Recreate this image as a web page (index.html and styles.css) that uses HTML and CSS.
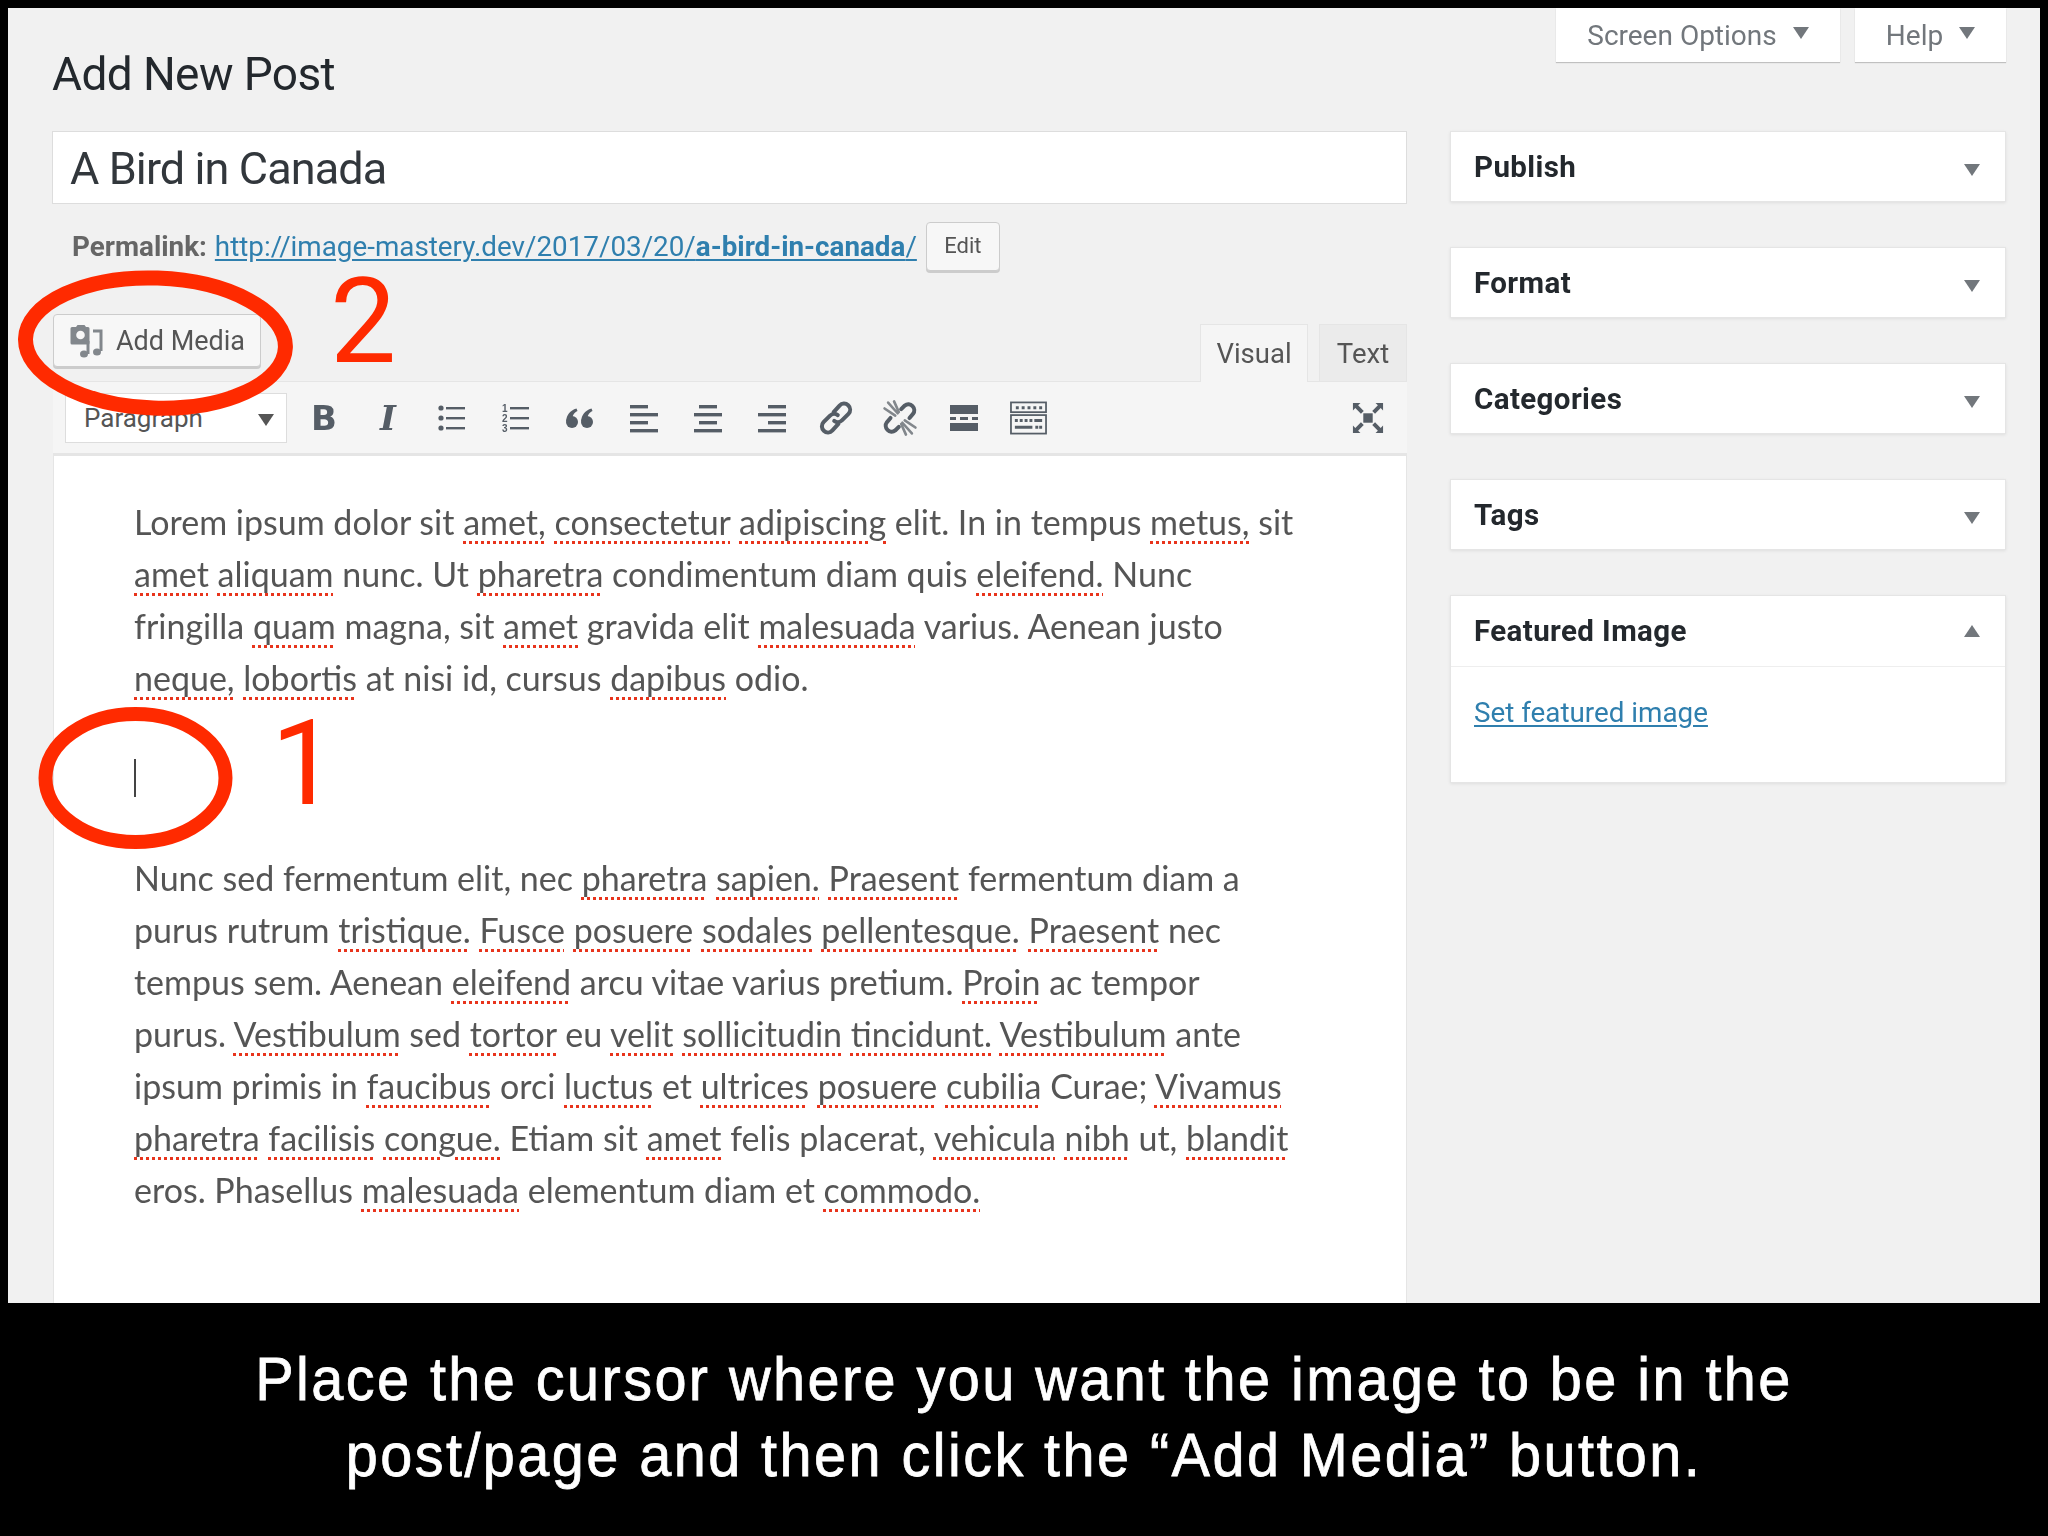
FILE: index.html
```html
<!DOCTYPE html>
<html lang="en">
<head>
<meta charset="utf-8">
<title>Add New Post</title>
<link rel="stylesheet" href="styles.css">
</head>
<body>
<div class="page">
  <div class="screen">
    <div class="ui">
      <header class="topbar">
        <h1 class="heading">Add New Post</h1>
        <div class="screen-tabs">
          <div class="screen-tab tab-options">Screen Options<span class="tri-small"></span></div>
          <div class="screen-tab tab-help">Help<span class="tri-small"></span></div>
        </div>
      </header>
      <div class="columns">
        <main class="main">
          <div class="title-box">A Bird in Canada</div>
          <div class="permalink">
            <b class="perma-label">Permalink:</b>
            <a class="perma-link">http://image-mastery.dev/2017/03/20/<b>a-bird-in-canada</b>/</a>
            <span class="btn btn-edit">Edit</span>
          </div>
          <div class="media-row">
            <span class="btn btn-media">
              <svg class="media-icon" viewBox="0 0 34 34"><path d="M3 3h4l1.500-2h7l1.500 2h2a1.500 1.500 0 0 1 1.500 1.500V19a1.500 1.500 0 0 1-1.500 1.500H3A1.500 1.500 0 0 1 1.500 19V4.500A1.500 1.500 0 0 1 3 3z" fill="#82878c"/><circle cx="11.500" cy="11" r="4.300" fill="#f7f7f7"/><path d="M24 7h8v20" fill="none" stroke="#82878c" stroke-width="3"/><ellipse cx="28" cy="28" rx="4" ry="3.500" fill="#82878c"/><path d="M19 17v13" stroke="#82878c" stroke-width="3"/><ellipse cx="15" cy="30" rx="4" ry="3.500" fill="#82878c"/></svg>
              Add Media
            </span>
            <div class="editor-tabs">
              <span class="editor-tab active">Visual</span>
              <span class="editor-tab">Text</span>
            </div>
          </div>
          <div class="toolbar">
            <div class="select">Paragraph<span class="tri"></span></div>
            <span class="tool glyph-b">B</span>
            <span class="tool glyph-i">I</span>
            <span class="tool"><svg class="ico" viewBox="0 0 32 32"><g fill="#555d66"><circle cx="5" cy="6" r="2.600"/><circle cx="5" cy="16" r="2.600"/><circle cx="5" cy="26" r="2.600"/><rect x="10" y="5" width="19" height="2.400"/><rect x="10" y="15" width="19" height="2.400"/><rect x="10" y="25" width="19" height="2.400"/></g></svg></span>
            <span class="tool"><svg class="ico" viewBox="0 0 32 32"><g fill="#555d66"><text class="ol-num" x="2" y="10">1</text><text class="ol-num" x="2" y="20">2</text><text class="ol-num" x="2" y="30">3</text><rect x="10" y="5" width="19" height="2.400"/><rect x="10" y="15" width="19" height="2.400"/><rect x="10" y="25" width="19" height="2.400"/></g></svg></span>
            <span class="tool"><svg class="ico" viewBox="0 0 32 32"><g fill="#555d66"><circle cx="8" cy="20" r="6"/><path d="M2.200 19C2.500 13 6 8.500 12.500 6.500l1 2.500C9.500 11 8 14 8.200 19z"/><circle cx="23" cy="20" r="6"/><path d="M17.200 19C17.500 13 21 8.500 27.500 6.500l1 2.500C24.500 11 23 14 23.200 19z"/></g></svg></span>
            <span class="tool"><svg class="ico" viewBox="0 0 32 32"><g fill="#555d66"><rect x="2" y="3" width="18" height="3.400"/><rect x="2" y="11" width="28" height="3.400"/><rect x="2" y="19" width="18" height="3.400"/><rect x="2" y="27" width="28" height="3.400"/></g></svg></span>
            <span class="tool"><svg class="ico" viewBox="0 0 32 32"><g fill="#555d66"><rect x="7" y="3" width="18" height="3.400"/><rect x="2" y="11" width="28" height="3.400"/><rect x="7" y="19" width="18" height="3.400"/><rect x="2" y="27" width="28" height="3.400"/></g></svg></span>
            <span class="tool"><svg class="ico" viewBox="0 0 32 32"><g fill="#555d66"><rect x="12" y="3" width="18" height="3.400"/><rect x="2" y="11" width="28" height="3.400"/><rect x="12" y="19" width="18" height="3.400"/><rect x="2" y="27" width="28" height="3.400"/></g></svg></span>
            <span class="tool"><svg class="ico ico-lg" viewBox="0 0 32 32"><g fill="none" stroke="#555d66" stroke-width="3.400" stroke-linecap="round"><path d="M14 11l5-5.500a5 5 0 0 1 7.500 7L21 18a5 5 0 0 1-6.500.5"/><path d="M18 21l-5 5.500a5 5 0 0 1-7.500-7L11 14a5 5 0 0 1 6.500-.5"/></g></svg></span>
            <span class="tool"><svg class="ico ico-lg" viewBox="0 0 32 32"><g fill="none" stroke="#555d66" stroke-width="3.400" stroke-linecap="round"><path d="M17 8.500l3-3a5 5 0 0 1 7 7l-3 3.500"/><path d="M15 23.500l-3 3a5 5 0 0 1-7-7l3-3.500"/></g><g stroke="#82878c" stroke-width="2.200" stroke-linecap="round"><path d="M6 3l8 9M3 8l9 6M11 2l4 9M26 29l-8-9M29 24l-9-6M21 30l-4-9"/></g></svg></span>
            <span class="tool"><svg class="ico" viewBox="0 0 32 32"><g fill="#555d66"><rect x="2" y="3" width="28" height="9"/><rect x="2" y="15" width="6" height="3"/><rect x="12" y="15" width="8" height="3"/><rect x="24" y="15" width="6" height="3"/><rect x="2" y="21" width="28" height="8"/></g></svg></span>
            <span class="tool"><svg class="ico ico-wide" viewBox="0 0 38 34"><g fill="none" stroke="#555d66" stroke-width="1.800"><rect x="1" y="1" width="36" height="10"/><rect x="1" y="14" width="36" height="19"/></g><g fill="#555d66"><path d="M6 5h3v3H6zM12 5h3v3h-3zM18 5h3v3h-3zM24 5h3v3h-3zM30 5h3v3h-3zM5 18h3v3H5zM10 18h3v3h-3zM15 18h3v3h-3zM20 18h3v3h-3zM25 18h8v3h-8zM5 25h18v3H5zM26 25h3v3h-3zM30 25h3v3h-3z"/></g></svg></span>
            <span class="tool tool-end"><svg class="ico" viewBox="0 0 34 34"><g fill="#555d66"><rect x="12" y="12" width="10" height="10"/><path d="M1 1h8L6.500 3.500l6 6-3 3-6-6L1 9zM33 1v8l-2.500-2.500-6 6-3-3 6-6L25 1zM1 33V25l2.500 2.500 6-6 3 3-6 6L9 33zM33 33h-8l2.500-2.500-6-6 3-3 6 6L33 25z"/></g></svg></span>
          </div>
          <div class="editor">
            <p class="para"><span class="line">Lorem ipsum dolor sit <u class="sp">amet,</u> <u class="sp">consectetur</u> <u class="sp">adipiscing</u> elit. In in tempus <u class="sp">metus,</u> sit</span><span class="line"><u class="sp">amet</u> <u class="sp">aliquam</u> nunc. Ut <u class="sp">pharetra</u> condimentum diam quis <u class="sp">eleifend.</u> Nunc</span><span class="line">fringilla <u class="sp">quam</u> magna, sit <u class="sp">amet</u> gravida elit <u class="sp">malesuada</u> varius. Aenean justo</span><span class="line"><u class="sp">neque,</u> <u class="sp">lobortis</u> at nisi id, cursus <u class="sp">dapibus</u> odio.</span></p>
            <p class="para caret-para"><span class="caret"></span></p>
            <p class="para"><span class="line">Nunc sed fermentum elit, nec <u class="sp">pharetra</u> <u class="sp">sapien.</u> <u class="sp">Praesent</u> fermentum diam a</span><span class="line">purus rutrum <u class="sp">tristique.</u> <u class="sp">Fusce</u> <u class="sp">posuere</u> <u class="sp">sodales</u> <u class="sp">pellentesque.</u> <u class="sp">Praesent</u> nec</span><span class="line">tempus sem. Aenean <u class="sp">eleifend</u> arcu vitae varius pretium. <u class="sp">Proin</u> ac tempor</span><span class="line">purus. <u class="sp">Vestibulum</u> sed <u class="sp">tortor</u> eu <u class="sp">velit</u> <u class="sp">sollicitudin</u> <u class="sp">tincidunt.</u> <u class="sp">Vestibulum</u> ante</span><span class="line">ipsum primis in <u class="sp">faucibus</u> orci <u class="sp">luctus</u> et <u class="sp">ultrices</u> <u class="sp">posuere</u> <u class="sp">cubilia</u> Curae; <u class="sp">Vivamus</u></span><span class="line"><u class="sp">pharetra</u> <u class="sp">facilisis</u> <u class="sp">congue.</u> Etiam sit <u class="sp">amet</u> felis placerat, <u class="sp">vehicula</u> <u class="sp">nibh</u> ut, <u class="sp">blandit</u></span><span class="line">eros. Phasellus <u class="sp">malesuada</u> elementum diam et <u class="sp">commodo.</u></span></p>
          </div>
        </main>
        <aside class="side">
          <section class="box"><div class="box-head"><h2 class="box-title">Publish</h2><span class="box-tri"></span></div></section>
          <section class="box"><div class="box-head"><h2 class="box-title">Format</h2><span class="box-tri"></span></div></section>
          <section class="box"><div class="box-head"><h2 class="box-title">Categories</h2><span class="box-tri"></span></div></section>
          <section class="box"><div class="box-head"><h2 class="box-title">Tags</h2><span class="box-tri"></span></div></section>
          <section class="box">
            <div class="box-head box-head-open"><h2 class="box-title">Featured Image</h2><span class="box-tri up"></span></div>
            <div class="box-body"><a class="feat-link">Set featured image</a></div>
          </section>
        </aside>
      </div>
    </div>
    <svg class="marks" viewBox="0 0 2032 1295">
      <ellipse cx="147.500" cy="335" rx="130" ry="65" transform="rotate(2 147 334)" fill="none" stroke="#ff2a00" stroke-width="15"/>
      <ellipse cx="127.500" cy="770" rx="90" ry="64" fill="none" stroke="#ff2a00" stroke-width="14"/>
    </svg>
    <span class="digit digit-two">2</span>
    <span class="digit digit-one">1</span>
  </div>
  <footer class="caption"><div class="caption-text">Place the cursor where you want the image to be in the<br>post/page and then click the “Add Media” button.</div></footer>
</div>
</body>
</html>
```
FILE: styles.css
```css
* { box-sizing: border-box; }
html, body { margin: 0; background: #000; }
.page { width: 2048px; height: 1536px; padding: 8px 8px 0; display: flex; flex-direction: column; background: #000; overflow: hidden; }
.screen { position: relative; height: 1295px; flex: none; overflow: hidden; background: #f1f1f1; }
.ui { height: 100%; filter: blur(0.6px); font-family: Roboto, "Liberation Sans", sans-serif; color: #444; }

.topbar { height: 123px; display: flex; justify-content: space-between; align-items: flex-start; padding: 0 34px 0 44px; }
.heading { margin: 42px 0 0; font-size: 46px; line-height: 48px; font-weight: 400; color: #23282d; letter-spacing: -0.6px; }
.screen-tabs { display: flex; gap: 15px; }
.screen-tab { height: 54px; background: #fff; box-shadow: 0 1px 1px rgba(0,0,0,.2); display: flex; align-items: center; justify-content: center; font-size: 28px; color: #72777c; }
.tab-options { width: 284px; }
.tab-help { width: 151px; }
.tri-small { width: 0; height: 0; margin: -4px 0 0 16px; border-left: 8px solid transparent; border-right: 8px solid transparent; border-top: 12px solid #72777c; }

.columns { display: flex; gap: 43px; padding-left: 44px; align-items: flex-start; }
.main { width: 1355px; flex: none; }
.side { width: 556px; flex: none; display: flex; flex-direction: column; gap: 45px; }

.title-box { height: 73px; background: #fff; border: 1px solid #ddd; padding-left: 17px; font-size: 45px; line-height: 73px; color: #32373c; letter-spacing: -0.9px; }
.permalink { display: flex; align-items: center; height: 49px; margin-top: 18px; padding-left: 20px; font-size: 27.800px; color: #666; white-space: nowrap; }
.perma-label { font-weight: 700; margin-right: 8px; }
.perma-link { color: #2f7fae; text-decoration: underline; text-underline-offset: 3px; }
.perma-link b { font-weight: 700; }
.btn { display: inline-flex; align-items: center; justify-content: center; background: #f7f7f7; border: 1px solid #ccc; border-radius: 4px; box-shadow: 0 2px 0 #ccc; color: #555; }
.btn-edit { width: 74px; height: 49px; margin-left: 9px; font-size: 22px; padding-bottom: 2px; }
.media-row { display: flex; justify-content: space-between; align-items: flex-end; height: 110px; margin-left: 1px; }
.btn-media { width: 208px; height: 53px; margin-bottom: 14px; font-size: 27px; gap: 13px; }
.media-icon { width: 34px; height: 34px; }
.editor-tabs { display: flex; gap: 11px; }
.editor-tab { height: 57px; padding-top: 12px; font-size: 27.500px; text-align: center; color: #555; background: #ebebeb; width: 88px; border: 1px solid #e5e5e5; border-bottom: 0; }
.editor-tab.active { width: 108px; background: #f5f5f5; margin-bottom: -1px; height: 58px; }

.toolbar { height: 75px; margin-left: 1px; display: flex; align-items: center; padding: 0 7px 0 12px; background: #f5f5f5; border: 1px solid #e5e5e5; border-width: 1px 0 3px; }
.select { width: 222px; height: 50px; flex: none; margin-right: 5px; position: relative; background: #fff; border: 1px solid #ddd; padding-left: 18px; font-size: 26px; line-height: 48px; color: #555; }
.tri { position: absolute; right: 12px; top: 20px; width: 0; height: 0; border-left: 8px solid transparent; border-right: 8px solid transparent; border-top: 12px solid #555; }
.tool { width: 64px; flex: none; display: flex; align-items: center; justify-content: center; color: #555d66; }
.tool-end { margin-left: auto; }
.glyph-b { font-family: "DejaVu Sans", sans-serif; font-weight: 700; font-size: 34px; line-height: 36px; }
.glyph-i { font-family: "DejaVu Serif", serif; font-style: italic; font-weight: 700; font-size: 34px; line-height: 36px; }
.ico { width: 32px; height: 32px; display: block; }
.ico-lg { width: 38px; height: 38px; }
.ico-wide { width: 37px; height: 34px; }
.ol-num { font: 700 10px "Liberation Sans", sans-serif; }

.editor { height: 847px; margin-left: 1px; background: #fff; padding: 40px 0 0 80px; border-left: 1px solid #e5e5e5; border-right: 1px solid #e5e5e5; }
.para { margin: 0 0 48px; font-family: Lato, "Open Sans", sans-serif; font-size: 34px; line-height: 52px; color: #555; white-space: nowrap; }
.line { display: block; }
.sp { text-decoration: underline dotted #e8341c 3px; text-underline-offset: 6px; }
.caret-para { height: 52px; display: flex; align-items: center; }
.caret { display: block; width: 2px; height: 38px; background: #444; }

.box { background: #fff; border: 1px solid #e5e5e5; box-shadow: 0 1px 3px rgba(0,0,0,.08); }
.box-head { height: 69px; display: flex; align-items: center; justify-content: space-between; padding: 0 25px 0 23px; }
.box-head-open { height: 71px; border-bottom: 1px solid #eee; }
.box-title { margin: 0; font-size: 29.500px; font-weight: 700; color: #23282d; letter-spacing: 0.4px; }
.box-tri { width: 0; height: 0; border-left: 8px solid transparent; border-right: 8px solid transparent; border-top: 12px solid #72777c; margin-top: 6px; }
.box-tri.up { border-top: 0; border-bottom: 12px solid #72777c; margin-top: 0; }
.box-body { height: 115px; padding: 29px 23px 0; font-size: 27.800px; }
.feat-link { color: #2f7fae; text-decoration: underline; text-underline-offset: 3px; }

.marks { position: absolute; left: 0; top: 0; width: 2032px; height: 1295px; filter: blur(0.5px); }
.digit { position: absolute; font-family: Roboto, "Liberation Sans", sans-serif; font-weight: 400; font-size: 118px; line-height: 84px; color: #ff2a00; filter: blur(0.4px); }
.digit-two { left: 322px; top: 272px; }
.digit-one { left: 263px; top: 714px; }

.caption { flex: 1; padding-top: 38px; font-family: "Liberation Sans", sans-serif; font-size: 62px; line-height: 76px; color: #fff; }
.caption-text { text-align: center; white-space: nowrap; letter-spacing: 2.600px; transform: scaleX(0.93); -webkit-text-stroke: 0.8px #fff; }
```
